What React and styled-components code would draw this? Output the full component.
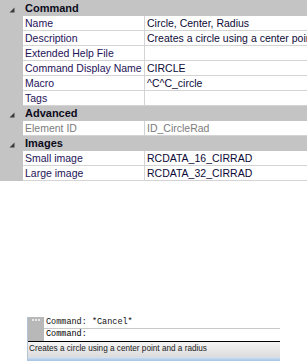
import React from "react";
import styled, { createGlobalStyle } from "styled-components";

const Global = createGlobalStyle`
  html, body { margin: 0; padding: 0; background: #ffffff; }
  body { width: 307px; height: 363px; overflow: hidden; font-family: "Liberation Sans", Arial, sans-serif; }
`;

const Page = styled.div`
  display: flex;
  flex-direction: column;
  align-items: flex-start;
  width: 307px;
`;

const Grid = styled.div`
  display: flex;
  flex-direction: column;
  width: 307px;
  overflow: hidden;
`;

const SectionHeader = styled.div`
  display: grid;
  grid-template-columns: 23px 1fr;
  height: ${(p) => (p.$first ? 16 : 15)}px;
  background: #c4c4c4;
  box-sizing: border-box;
`;

const Toggle = styled.div`
  display: flex;
  align-items: flex-start;
  justify-content: flex-start;
  padding: ${(p) => (p.$first ? 7 : 6)}px 0 0 9px;
  box-sizing: border-box;
`;

const HeaderTitle = styled.div`
  font-size: 11px;
  font-weight: bold;
  color: #0c0c1c;
  line-height: 15px;
  padding: ${(p) => (p.$first ? 1 : 0)}px 0 0 2px;
`;

const Row = styled.div`
  display: grid;
  grid-template-columns: 23px 122px 1fr;
  height: 15px;
`;

const Gutter = styled.div`
  background: #c4c4c4;
`;

const Cell = styled.div`
  background: #ffffff;
  border-bottom: 1px solid #d4d4d4;
  border-right: ${(p) => (p.$label ? "1px solid #d4d4d4" : "none")};
  font-size: 10.5px;
  line-height: 14px;
  padding: 0 0 0 2px;
  color: ${(p) => (p.$disabled ? "#7c7c7c" : p.$label ? "#1e1258" : "#0c0a36")};
  white-space: nowrap;
  overflow: hidden;
  box-sizing: border-box;
`;

const CmdWindow = styled.div`
  margin: 136px 0 0 27px;
  width: 253px;
  max-width: 253px;
  flex: none;
  align-self: flex-start;
  display: flex;
  flex-direction: column;
  border-left: 1px solid #b4c4d8;
  box-sizing: border-box;
  overflow: hidden;
`;

const History = styled.div`
  display: grid;
  grid-template-columns: 16px 236px;
  height: 24px;
`;

const Grip = styled.div`
  background: #b8b8b8;
  display: flex;
  justify-content: center;
  padding-top: 2px;
  box-sizing: border-box;
`;

const Lines = styled.div`
  display: flex;
  flex-direction: column;
  background: #ffffff;
`;

const CmdLine = styled.div`
  font-family: "Liberation Mono", "Courier New", monospace;
  font-size: 8.5px;
  line-height: 11px;
  height: 12px;
  box-sizing: border-box;
  padding-left: 2px;
  color: ${(p) => (p.$prompt ? "#000000" : "#101010")};
  border-bottom: ${(p) => (p.$sep ? "1px solid #c8c8c8" : "none")};
  white-space: pre;
`;

const StatusBar = styled.div`
  width: 252px;
  border-top: 1px solid #000000;
  height: 16px;
  box-sizing: border-box;
  background: linear-gradient(#f4f4f4, #dcdcdc);
  font-size: 8.2px;
  line-height: 14px;
  color: #1a1a1a;
  padding-left: 1px;
  white-space: nowrap;
  overflow: hidden;
`;

const FrameBottom = styled.div`
  width: 252px;
  height: 3px;
  background: linear-gradient(#c4d8ee, #a8c4e4);
  border-top: 1px solid #d4e0ee;
`;

const Tri = () => (
  <svg width="6" height="6" viewBox="0 0 6 6">
    <polygon points="5.5,0.5 5.5,5.5 0.5,5.5" fill="#3c3c3c" />
  </svg>
);

const Dots = () => (
  <svg width="8" height="3" viewBox="0 0 8 3">
    <rect x="0" y="0" width="2" height="2" fill="#e8e8e8" />
    <rect x="3" y="0" width="2" height="2" fill="#e8e8e8" />
    <rect x="6" y="0" width="2" height="2" fill="#e8e8e8" />
  </svg>
);

const sections = [
  {
    title: "Command",
    rows: [
      ["Name", "Circle, Center, Radius"],
      ["Description", "Creates a circle using a center point and a radius"],
      ["Extended Help File", ""],
      ["Command Display Name", "CIRCLE"],
      ["Macro", "^C^C_circle"],
      ["Tags", ""],
    ],
  },
  {
    title: "Advanced",
    rows: [["Element ID", "ID_CircleRad", true]],
  },
  {
    title: "Images",
    rows: [
      ["Small image", "RCDATA_16_CIRRAD"],
      ["Large image", "RCDATA_32_CIRRAD"],
    ],
  },
];

export default function App() {
  return (
    <Page>
      <Global />
      <Grid>
        {sections.map((s, si) => (
          <React.Fragment key={s.title}>
            <SectionHeader $first={si === 0}>
              <Toggle $first={si === 0}>
                <Tri />
              </Toggle>
              <HeaderTitle $first={si === 0}>{s.title}</HeaderTitle>
            </SectionHeader>
            {s.rows.map(([label, value, disabled]) => (
              <Row key={label}>
                <Gutter />
                <Cell $label $disabled={disabled}>{label}</Cell>
                <Cell $disabled={disabled}>{value}</Cell>
              </Row>
            ))}
          </React.Fragment>
        ))}
      </Grid>
      <CmdWindow>
        <History>
          <Grip>
            <Dots />
          </Grip>
          <Lines>
            <CmdLine $sep>Command: *Cancel*</CmdLine>
            <CmdLine $prompt>Command:</CmdLine>
          </Lines>
        </History>
        <StatusBar>Creates a circle using a center point and a radius</StatusBar>
        <FrameBottom />
      </CmdWindow>
    </Page>
  );
}
